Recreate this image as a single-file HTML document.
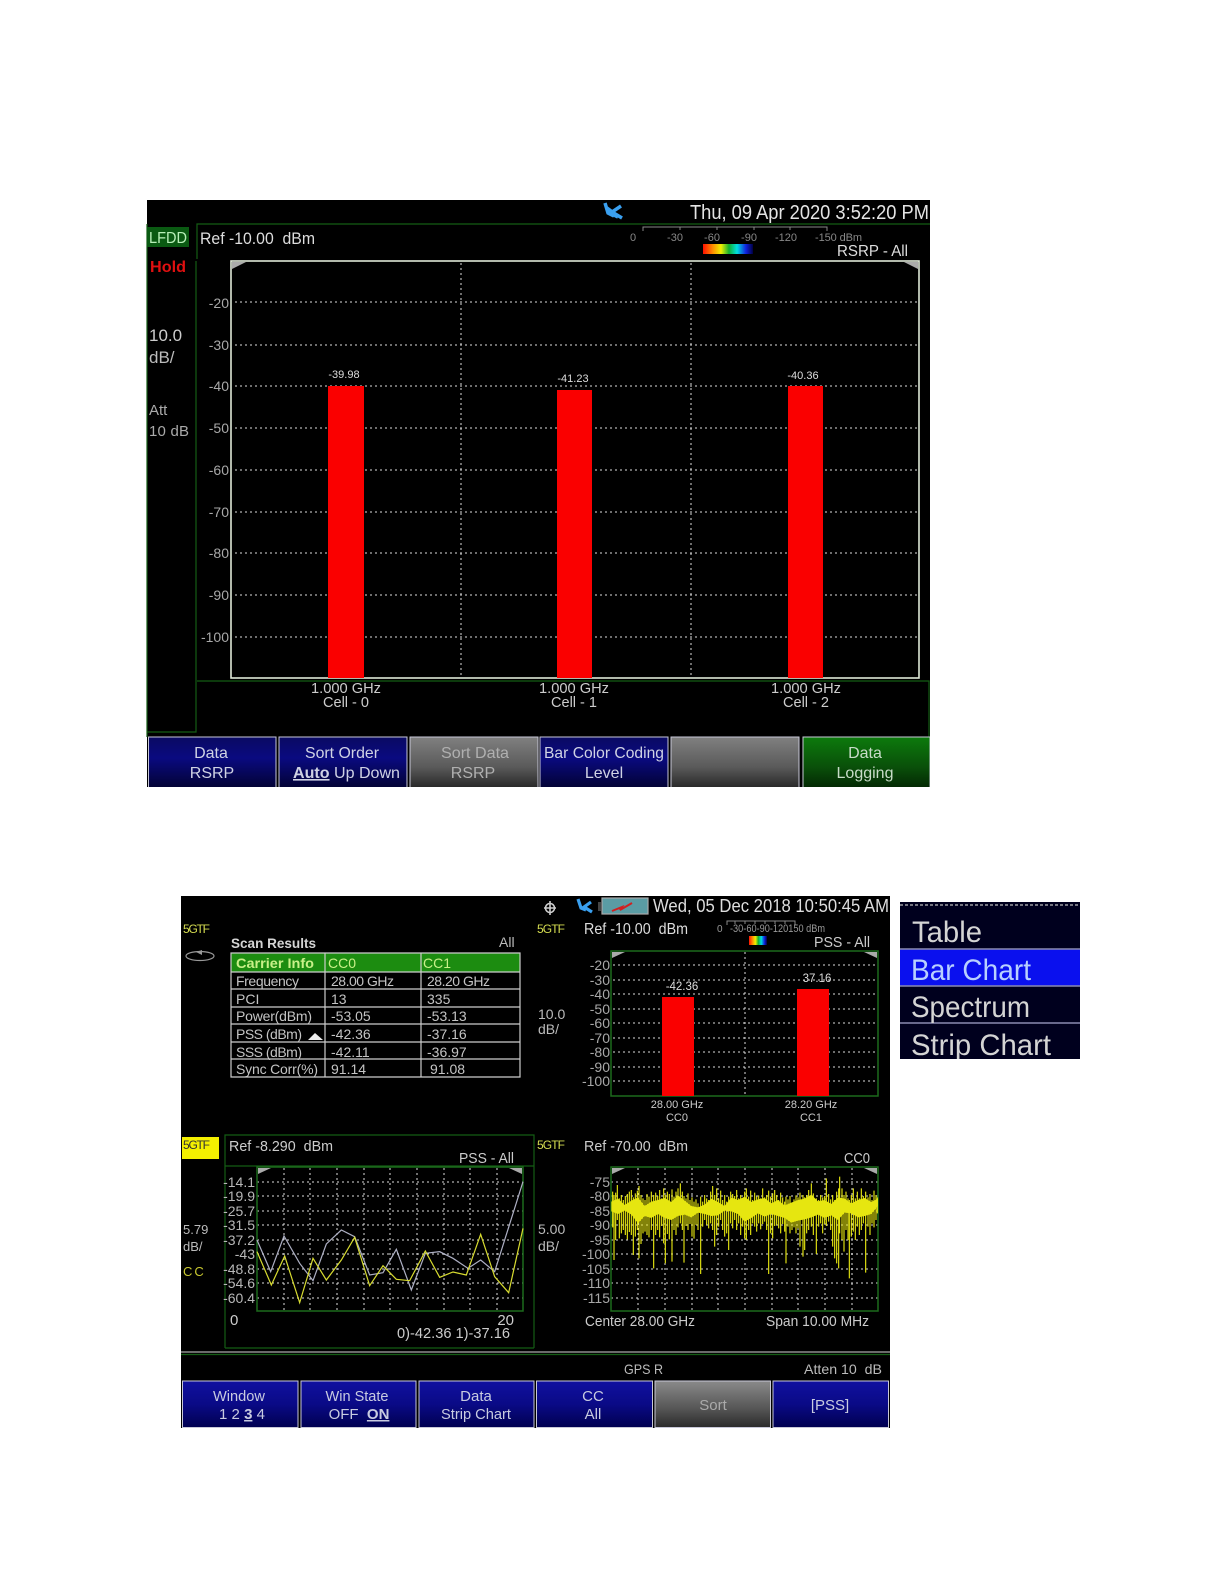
<!DOCTYPE html>
<html><head><meta charset="utf-8"><title>Spectrum analyzer screens</title>
<style>
html,body{margin:0;padding:0;background:#fff}
svg{display:block;filter:blur(.35px)}
text{font-family:"Liberation Sans",sans-serif;fill:#d8d8d8}
.g{stroke:#ddd;stroke-width:1;stroke-dasharray:2 3;fill:none}
.gb{stroke:#1c6a1c;fill:none;stroke-width:1.5}
.b{text-anchor:middle;font-size:16px;fill:#cfd2e4}
.s{text-anchor:middle;font-size:15px;fill:#c8cbe0}
.y1{text-anchor:end;font-size:14px;fill:#a8a8a8}
.y2{text-anchor:end;font-size:14px;fill:#b8b8b8}
.t{font-size:14px;fill:#c4c4c4}
.yl{font-size:12px;fill:#d4dc50}
.btn{stroke:#c8c8d8;stroke-width:1}
</style></head><body>
<svg width="1224" height="1584" viewBox="0 0 1224 1584" xmlns="http://www.w3.org/2000/svg">
<defs>
<linearGradient id="nv" x1="0" y1="0" x2="0" y2="1"><stop offset="0" stop-color="#0a0a62"/><stop offset=".35" stop-color="#0a0a80"/><stop offset="1" stop-color="#00001c"/></linearGradient>
<linearGradient id="nv2" x1="0" y1="0" x2="0" y2="1"><stop offset="0" stop-color="#1010a0"/><stop offset=".5" stop-color="#0a0a86"/><stop offset="1" stop-color="#000050"/></linearGradient>
<linearGradient id="gy" x1="0" y1="0" x2="0" y2="1"><stop offset="0" stop-color="#808080"/><stop offset=".5" stop-color="#5a5a5a"/><stop offset="1" stop-color="#111"/></linearGradient>
<linearGradient id="gy2" x1="0" y1="0" x2="0" y2="1"><stop offset="0" stop-color="#8a8a8a"/><stop offset=".6" stop-color="#555"/><stop offset="1" stop-color="#2a2a2a"/></linearGradient>
<linearGradient id="gn" x1="0" y1="0" x2="0" y2="1"><stop offset="0" stop-color="#0c7a0c"/><stop offset=".5" stop-color="#0a500a"/><stop offset="1" stop-color="#001500"/></linearGradient>
<linearGradient id="sp" x1="0" y1="0" x2="1" y2="0"><stop offset="0" stop-color="#ff1000"/><stop offset=".2" stop-color="#ff9000"/><stop offset=".36" stop-color="#f0f000"/><stop offset=".52" stop-color="#10b030"/><stop offset=".68" stop-color="#00e0e0"/><stop offset=".86" stop-color="#1020e0"/><stop offset="1" stop-color="#000040"/></linearGradient>
<clipPath id="pop"><rect x="900" y="902" width="180" height="157"/></clipPath>
<clipPath id="p1b"><rect x="147" y="700" width="783" height="87"/></clipPath>
</defs>

<!-- PANEL 1 -->
<rect x="147" y="200" width="783" height="587" fill="#000"/>
<path d="M605 203l3 10 6 3M621 206l-9 6 10 6M607 208l8 6M612 214l6 3" stroke="#3aa0f0" stroke-width="3.500" fill="none"/>
<text x="690" y="219" font-size="20" textLength="239" lengthAdjust="spacingAndGlyphs" style="fill:#e4e4e4">Thu, 09 Apr 2020 3:52:20 PM</text>
<path d="M197 259V224H930M196 261V732H147M197 681H929V737M147 224V737" stroke="#145c14" stroke-width="1.200" fill="none"/>
<rect x="147" y="227" width="42" height="20" fill="#0a5a12"/>
<text x="149" y="243" font-size="16" textLength="38" lengthAdjust="spacingAndGlyphs" style="fill:#b8f0b8">LFDD</text>
<text x="150" y="272" font-size="16" font-weight="bold" textLength="36" lengthAdjust="spacingAndGlyphs" style="fill:#e01010">Hold</text>
<text x="149" y="341" font-size="17" style="fill:#ccc">10.0</text>
<text x="149" y="363" font-size="17" style="fill:#bbb">dB/</text>
<text x="149" y="415" font-size="15" style="fill:#aaa">Att</text>
<text x="149" y="436" font-size="15" textLength="40" style="fill:#aaa">10 dB</text>
<text x="200" y="244" font-size="17" textLength="115" lengthAdjust="spacingAndGlyphs" style="fill:#ddd">Ref -10.00&#160;&#160;dBm</text>
<!-- scale -->
<path d="M643 231V227H827V231M680 227v3M717 227v3M754 227v3M790 227v3" stroke="#888" fill="none"/>
<text x="633" y="241" font-size="11" text-anchor="middle" style="fill:#888">0</text>
<text x="675" y="241" font-size="11" text-anchor="middle" style="fill:#888">-30</text>
<text x="712" y="241" font-size="11" text-anchor="middle" style="fill:#888">-60</text>
<text x="749" y="241" font-size="11" text-anchor="middle" style="fill:#888">-90</text>
<text x="786" y="241" font-size="11" text-anchor="middle" style="fill:#888">-120</text>
<text x="815" y="241" font-size="11" textLength="47" style="fill:#888">-150 dBm</text>
<rect x="703" y="244" width="50" height="10" fill="url(#sp)"/>
<text x="837" y="256" font-size="16" textLength="71" lengthAdjust="spacingAndGlyphs" style="fill:#ddd">RSRP - All</text>
<!-- plot 1 -->
<path class="g" d="M235 302H919M235 345H919M235 386H919M235 428H919M235 470H919M235 512H919M235 553H919M235 595H919M235 637H919M461 263V678M691 263V678"/>
<rect x="231" y="261" width="688" height="417" fill="none" stroke="#dfe8d8" stroke-width="1.600"/>
<path d="M232 262h14l-14 7zM918 262h-14l14 7z" fill="#aaa"/>
<text class="y1" x="229" y="308">-20</text><text class="y1" x="229" y="350">-30</text><text class="y1" x="229" y="391">-40</text><text class="y1" x="229" y="433">-50</text><text class="y1" x="229" y="475">-60</text><text class="y1" x="229" y="517">-70</text><text class="y1" x="229" y="558">-80</text><text class="y1" x="229" y="600">-90</text><text class="y1" x="229" y="642">-100</text>
<rect x="328" y="386" width="36" height="292" fill="#fa0000"/>
<rect x="557" y="390" width="35" height="288" fill="#fa0000"/>
<rect x="788" y="386" width="35" height="292" fill="#fa0000"/>
<g font-size="11" text-anchor="middle">
<text x="344" y="378" style="fill:#ddd">-39.98</text>
<text x="573" y="382" style="fill:#ddd">-41.23</text>
<text x="803" y="379" style="fill:#ddd">-40.36</text>
</g>
<g font-size="15" text-anchor="middle">
<text x="346" y="693" textLength="70" lengthAdjust="spacingAndGlyphs" style="fill:#ccc">1.000 GHz</text>
<text x="346" y="707" textLength="46" lengthAdjust="spacingAndGlyphs" style="fill:#ccc">Cell - 0</text>
<text x="574" y="693" textLength="70" lengthAdjust="spacingAndGlyphs" style="fill:#ccc">1.000 GHz</text>
<text x="574" y="707" textLength="46" lengthAdjust="spacingAndGlyphs" style="fill:#ccc">Cell - 1</text>
<text x="806" y="693" textLength="70" lengthAdjust="spacingAndGlyphs" style="fill:#ccc">1.000 GHz</text>
<text x="806" y="707" textLength="46" lengthAdjust="spacingAndGlyphs" style="fill:#ccc">Cell - 2</text>
</g>
<g clip-path="url(#p1b)">
<rect class="btn" x="148.500" y="737" width="127.500" height="60" fill="url(#nv)"/>
<rect class="btn" x="279" y="737" width="128" height="60" fill="url(#nv)"/>
<rect class="btn" x="410" y="737" width="128" height="60" fill="url(#gy)"/>
<rect class="btn" x="540" y="737" width="128" height="60" fill="url(#nv)"/>
<rect class="btn" x="671" y="737" width="128" height="60" fill="url(#gy)"/>
<rect class="btn" x="803" y="737" width="127" height="60" fill="url(#gn)"/>
</g>
<text class="b" x="211" y="758">Data</text><text class="b" x="212" y="778">RSRP</text>
<text class="b" x="342" y="758" textLength="74" lengthAdjust="spacingAndGlyphs">Sort Order</text>
<text x="293" y="778" font-size="16" textLength="107" lengthAdjust="spacingAndGlyphs" style="fill:#cfd2e4"><tspan font-weight="bold" text-decoration="underline">Auto</tspan> Up Down</text>
<text class="b" x="475" y="758" style="fill:#b0b0b0" textLength="68" lengthAdjust="spacingAndGlyphs">Sort Data</text><text class="b" x="473" y="778" style="fill:#b0b0b0">RSRP</text>
<text class="b" x="604" y="758" textLength="120" lengthAdjust="spacingAndGlyphs">Bar Color Coding</text><text class="b" x="604" y="778">Level</text>
<text class="b" x="865" y="758" style="fill:#c8dcc8">Data</text><text class="b" x="865" y="778" style="fill:#c8dcc8">Logging</text>

<!-- PANEL 2 -->
<rect x="181" y="896" width="709" height="532" fill="#000"/>
<g stroke="#ccc" stroke-width="1.600" fill="none"><circle cx="550" cy="908" r="4.500"/><path d="M544 908h12M550 901v14"/></g>
<path d="M578 899l3 9 5 2M591 902l-7 5 8 5M584 907l5 3" stroke="#3aa0f0" stroke-width="3.200" fill="none"/>
<rect x="598" y="902" width="3" height="9" fill="#444"/>
<rect x="602" y="898" width="46" height="16" fill="#5a9ca4" stroke="#aaa" stroke-width="1.200"/>
<path d="M612 911l10-4-2 3 12-7" stroke="#d02020" stroke-width="2" fill="none"/>
<text x="653" y="912" font-size="18" textLength="236" lengthAdjust="spacingAndGlyphs" style="fill:#ddd">Wed, 05 Dec 2018 10:50:45 AM</text>
<text class="yl" x="183" y="933" textLength="27">5GTF</text>
<text class="yl" x="537" y="933" textLength="28">5GTF</text>
<ellipse cx="200" cy="956" rx="14" ry="4.500" fill="none" stroke="#999" stroke-width="1.200"/><path d="M196 952l6-2v5z" fill="#999"/>
<text x="231" y="948" font-size="14" font-weight="bold" textLength="85" lengthAdjust="spacingAndGlyphs" style="fill:#d4d4d4">Scan Results</text>
<text x="499" y="947" font-size="14" style="fill:#bbb">All</text>
<!-- table -->
<rect x="231" y="953" width="289" height="19" fill="#1c8c10"/>
<path d="M231 953H520V1077H231ZM231 972H520M231 989H520M231 1007H520M231 1024H520M231 1042H520M231 1059H520M325 953V1077M421 953V1077" fill="none" stroke="#ccc" stroke-width="1.200"/>
<g font-size="14" font-weight="bold">
<text x="236" y="968" textLength="78" lengthAdjust="spacingAndGlyphs" style="fill:#c8f088">Carrier Info</text>
<text x="328" y="968" style="fill:#c8f088;font-weight:normal">CC0</text>
<text x="423" y="968" style="fill:#c8f088;font-weight:normal">CC1</text>
</g>
<text class="t" x="236" y="986" textLength="63">Frequency</text><text class="t" x="331" y="986" textLength="63">28.00 GHz</text><text class="t" x="427" y="986" textLength="63">28.20 GHz</text>
<text class="t" x="236" y="1004">PCI</text><text class="t" x="331" y="1004">13</text><text class="t" x="427" y="1004">335</text>
<text class="t" x="236" y="1021" textLength="76">Power(dBm)</text><text class="t" x="331" y="1021">-53.05</text><text class="t" x="427" y="1021">-53.13</text>
<text class="t" x="236" y="1039" textLength="66">PSS (dBm)</text><text class="t" x="331" y="1039">-42.36</text><text class="t" x="427" y="1039">-37.16</text>
<path d="M308 1040l7-7 8 7z" fill="#eee"/>
<text class="t" x="236" y="1057" textLength="66">SSS (dBm)</text><text class="t" x="331" y="1057">-42.11</text><text class="t" x="427" y="1057">-36.97</text>
<text class="t" x="236" y="1074" textLength="82">Sync Corr(%)</text><text class="t" x="331" y="1074">91.14</text><text class="t" x="430" y="1074">91.08</text>

<!-- top right -->
<text x="584" y="934" font-size="16" textLength="104" lengthAdjust="spacingAndGlyphs" style="fill:#ddd">Ref -10.00&#160;&#160;dBm</text>
<text x="717" y="932" font-size="10" style="fill:#999">0</text>
<path d="M727 925V921H795V925M735 921v3M745 921v3M755 921v3M765 921v3M775 921v3M785 921v3" stroke="#888" fill="none"/>
<text x="730" y="932" font-size="11" textLength="95" lengthAdjust="spacingAndGlyphs" style="fill:#999">-30-60-90-120150 dBm</text>
<rect x="749" y="936" width="18" height="9" fill="url(#sp)"/>
<text x="814" y="947" font-size="15" textLength="56" lengthAdjust="spacingAndGlyphs" style="fill:#ccc">PSS - All</text>
<path class="g" d="M613 965H878M613 980H878M613 994H878M613 1009H878M613 1023H878M613 1038H878M613 1052H878M613 1067H878M613 1081H878M745 952V1096"/>
<rect class="gb" x="611" y="951" width="267" height="145"/>
<path d="M612 952h13l-13 6zM877 952h-13l13 6z" fill="#aaa"/>
<text class="y1" x="610" y="970">-20</text><text class="y1" x="610" y="985">-30</text><text class="y1" x="610" y="999">-40</text><text class="y1" x="610" y="1014">-50</text><text class="y1" x="610" y="1028">-60</text><text class="y1" x="610" y="1043">-70</text><text class="y1" x="610" y="1057">-80</text><text class="y1" x="610" y="1072">-90</text><text class="y1" x="610" y="1086">-100</text>
<rect x="662" y="997" width="32" height="99" fill="#fa0000"/>
<rect x="797" y="989" width="32" height="107" fill="#fa0000"/>
<text x="682" y="990" font-size="11.500" text-anchor="middle" style="fill:#ddd">-42.36</text>
<text x="817" y="982" font-size="11.500" text-anchor="middle" style="fill:#ddd">37.16</text>
<g font-size="11" text-anchor="middle">
<text x="677" y="1108" style="fill:#ccc">28.00 GHz</text><text x="677" y="1121" style="fill:#ccc">CC0</text>
<text x="811" y="1108" style="fill:#ccc">28.20 GHz</text><text x="811" y="1121" style="fill:#ccc">CC1</text>
</g>
<text x="538" y="1019" font-size="14" style="fill:#bbb">10.0</text><text x="538" y="1034" font-size="14" style="fill:#bbb">dB/</text>

<!-- bottom left -->
<rect x="182" y="1137" width="37" height="22" fill="#f4f000"/>
<text x="183" y="1149" font-size="12" textLength="27" style="fill:#333">5GTF</text>
<path d="M225 1348V1135H534V1166M225 1166H534M225 1348H534M534 1135V1348" stroke="#145c14" stroke-width="1.200" fill="none"/>
<text x="229" y="1151" font-size="15" textLength="104" lengthAdjust="spacingAndGlyphs" style="fill:#ccc">Ref -8.290&#160;&#160;dBm</text>
<text x="459" y="1163" font-size="15" textLength="55" lengthAdjust="spacingAndGlyphs" style="fill:#ccc">PSS - All</text>
<path class="g" d="M257 1182H523M257 1196H523M257 1211H523M257 1225H523M257 1240H523M257 1254H523M257 1269H523M257 1283H523M257 1298H523M284 1168V1311M310 1168V1311M337 1168V1311M364 1168V1311M390 1168V1311M417 1168V1311M444 1168V1311M470 1168V1311M497 1168V1311"/>
<rect class="gb" x="257" y="1167" width="266" height="144"/>
<path d="M258 1168h13l-13 6zM522 1168h-13l13 6z" fill="#aaa"/>
<text class="y2" x="255" y="1187">-14.1</text><text class="y2" x="255" y="1201">-19.9</text><text class="y2" x="255" y="1216">-25.7</text><text class="y2" x="255" y="1230">-31.5</text><text class="y2" x="255" y="1245">-37.2</text><text class="y2" x="255" y="1259">-43</text><text class="y2" x="255" y="1274">-48.8</text><text class="y2" x="255" y="1288">-54.6</text><text class="y2" x="255" y="1303">-60.4</text>
<g transform="translate(178,1120) scale(.33333)" fill="none" stroke-width="3.600">
<polyline stroke="#aeb0c4" points="237,360 278,455 318,348 365,430 405,482 445,372 490,330 530,350 575,465 615,458 655,388 700,510 742,400 785,395 825,415 870,445 908,420 950,455 1035,185"/>
<polyline stroke="#d8dc30" points="237,395 280,495 320,408 365,548 405,415 445,480 490,420 530,352 575,497 615,437 655,478 695,482 742,393 785,472 825,456 865,465 908,343 950,470 992,518 1035,325"/>
</g>
<text x="183" y="1234" font-size="13" style="fill:#bbb">5.79</text><text x="183" y="1251" font-size="13" style="fill:#bbb">dB/</text>
<text x="183" y="1276" font-size="13" letter-spacing="2" style="fill:#c8c830">CC</text>
<text x="230" y="1325" font-size="15" style="fill:#ccc">0</text>
<text x="514" y="1325" font-size="15" text-anchor="end" style="fill:#ccc">20</text>
<text x="397" y="1338" font-size="15" textLength="113" lengthAdjust="spacingAndGlyphs" style="fill:#ccc">0)-42.36 1)-37.16</text>

<!-- bottom right -->
<text class="yl" x="537" y="1149" textLength="28">5GTF</text>
<text x="584" y="1151" font-size="15" textLength="104" lengthAdjust="spacingAndGlyphs" style="fill:#ccc">Ref -70.00&#160;&#160;dBm</text>
<text x="844" y="1163" font-size="15" textLength="26" lengthAdjust="spacingAndGlyphs" style="fill:#ccc">CC0</text>
<path class="g" d="M611 1182H878M611 1196H878M611 1211H878M611 1225H878M611 1240H878M611 1254H878M611 1269H878M611 1283H878M611 1298H878M638 1168V1311M665 1168V1311M692 1168V1311M718 1168V1311M745 1168V1311M772 1168V1311M798 1168V1311M825 1168V1311M852 1168V1311"/>
<rect class="gb" x="611" y="1167" width="267" height="144"/>
<path d="M612 1168h13l-13 6zM877 1168h-13l13 6z" fill="#aaa"/>
<text class="y1" x="610" y="1187">-75</text><text class="y1" x="610" y="1201">-80</text><text class="y1" x="610" y="1216">-85</text><text class="y1" x="610" y="1230">-90</text><text class="y1" x="610" y="1245">-95</text><text class="y1" x="610" y="1259">-100</text><text class="y1" x="610" y="1274">-105</text><text class="y1" x="610" y="1288">-110</text><text class="y1" x="610" y="1303">-115</text>
<g transform="translate(528,1120) scale(.33333)">
<path fill="#e6e610" d="M250 245L270 236 290 255 310 242 330 232 350 258 370 245 390 240 410 234 430 246 450 226 470 242 490 258 510 262 530 254 550 236 570 246 590 258 610 232 630 240 650 230 670 246 690 238 710 234 730 250 750 240 770 256 790 248 810 240 830 236 850 224 870 244 890 240 910 252 930 232 950 236 970 250 990 240 1010 234 1030 246 1050 236L1050 258 1030 282 1010 288 990 292 970 280 950 278 930 300 910 286 890 294 870 284 850 292 830 298 810 302 790 308 770 294 750 288 730 282 710 290 690 280 670 294 650 305 630 282 610 274 590 272 570 286 550 288 530 282 510 278 490 292 470 284 450 288 430 300 410 294 390 282 370 294 350 288 330 310 310 284 290 272 270 282 250 274Z"/>
<path fill="none" stroke="#e6e610" stroke-width="3.400" d="M254 215V322M258 225V420M263 218V360M268 195V300M274 235V355M280 225V340M286 240V330M292 228V345M298 222V358M304 215V336M310 210V345M316 232V405M322 220V350M328 212V330M333 198V415M339 225V372M345 235V340M351 240V335M357 222V345M363 230V352M370 215V330M377 225V445M383 218V345M389 228V330M395 210V352M401 235V318M407 205V370M412 225V430M418 215V342M424 222V358M432 208V425M438 230V330M444 215V345M450 205V322M457 190V310M463 215V330M468 228V428M474 235V318M480 220V330M486 240V312M492 232V350M498 245V356M504 238V315M510 250V330M518 230V462M524 245V320M530 225V300M536 235V315M542 240V325M548 215V310M554 198V330M560 225V380M566 205V345M572 235V320M578 212V300M584 240V330M590 225V350M596 245V340M602 230V390M608 215V310M614 222V325M620 228V300M626 210V330M632 235V310M638 225V345M644 240V320M650 215V355M655 205V360M662 230V330M668 212V345M674 240V310M680 218V320M686 230V335M692 226V310M698 235V328M704 205V312M710 232V305M716 225V330M722 212V462M728 230V340M734 220V355M740 210V318M746 225V315M752 240V325M758 218V340M764 232V312M770 245V335M774 230V430M780 238V320M786 228V340M792 250V330M798 238V322M804 226V340M810 232V325M816 218V380M825 225V410M830 232V390M836 225V340M842 210V330M850 190V320M856 220V345M865 235V402M872 240V320M878 225V310M884 232V340M890 228V312M895 175V318M902 222V305M908 238V330M914 225V380M920 240V415M926 215V430M932 205V445M935 170V340M942 205V360M948 225V395M954 215V330M960 235V360M964 240V475M970 225V350M976 205V335M982 235V360M988 215V320M994 235V345M1000 205V330M1006 228V310M1013 215V458M1020 232V320M1026 222V345M1032 240V310M1038 212V322M1044 225V300M1048 232V280"/>
</g>
<text x="538" y="1234" font-size="14" style="fill:#bbb">5.00</text><text x="538" y="1251" font-size="14" style="fill:#bbb">dB/</text>
<text x="585" y="1326" font-size="15" textLength="110" lengthAdjust="spacingAndGlyphs" style="fill:#ccc">Center 28.00 GHz</text>
<text x="766" y="1326" font-size="15" textLength="103" lengthAdjust="spacingAndGlyphs" style="fill:#ccc">Span 10.00 MHz</text>

<!-- footer -->
<path d="M181 1352H890" stroke="#aaa" stroke-width="1.200"/>
<path d="M181 1354.500H890" stroke="#145c14" stroke-width="1.200"/>
<text x="624" y="1374" font-size="14" textLength="39" lengthAdjust="spacingAndGlyphs" style="fill:#bbb">GPS R</text>
<text x="804" y="1374" font-size="14" textLength="78" lengthAdjust="spacingAndGlyphs" style="fill:#bbb">Atten 10&#160;&#160;dB</text>
<rect class="btn" x="182.500" y="1381" width="115.500" height="46.500" fill="url(#nv2)"/>
<rect class="btn" x="301" y="1381" width="115" height="46.500" fill="url(#nv2)"/>
<rect class="btn" x="419" y="1381" width="115" height="46.500" fill="url(#nv2)"/>
<rect class="btn" x="536.500" y="1381" width="116" height="46.500" fill="url(#nv2)"/>
<rect class="btn" x="655" y="1381" width="115.500" height="46.500" fill="url(#gy2)"/>
<rect class="btn" x="773" y="1381" width="115.500" height="46.500" fill="url(#nv2)"/>
<text class="s" x="239" y="1401" textLength="52" lengthAdjust="spacingAndGlyphs">Window</text><text class="s" x="242" y="1419">1 2 <tspan font-weight="bold" text-decoration="underline">3</tspan> 4</text>
<text class="s" x="357" y="1401" textLength="63" lengthAdjust="spacingAndGlyphs">Win State</text><text class="s" x="359" y="1419">OFF&#160;&#160;<tspan font-weight="bold" text-decoration="underline">ON</tspan></text>
<text class="s" x="476" y="1401">Data</text><text class="s" x="476" y="1419" textLength="70" lengthAdjust="spacingAndGlyphs">Strip Chart</text>
<text class="s" x="593" y="1401">CC</text><text class="s" x="593" y="1419">All</text>
<text class="s" x="713" y="1410" style="fill:#aaa">Sort</text>
<text class="s" x="830" y="1410">[PSS]</text>

<!-- POPUP -->
<rect x="900" y="902" width="180" height="157" fill="#00001e"/>
<rect x="900" y="949" width="180" height="37" fill="#0a10ee"/>
<path d="M900 905H1080" stroke="#bbb" stroke-dasharray="3 2" stroke-width="1.200"/>
<path d="M900 949H1080M900 986H1080M900 1023H1080" stroke="#8a8ab0" stroke-width="1.600"/>
<g clip-path="url(#pop)" font-size="30">
<text x="912" y="942" textLength="70" lengthAdjust="spacingAndGlyphs" style="fill:#d4d4d4">Table</text>
<text x="911" y="980" textLength="120" lengthAdjust="spacingAndGlyphs" style="fill:#b8d0ff">Bar Chart</text>
<text x="911" y="1017" textLength="119" lengthAdjust="spacingAndGlyphs" style="fill:#d4d4d4">Spectrum</text>
<text x="911" y="1055" textLength="140" lengthAdjust="spacingAndGlyphs" style="fill:#d4d4d4">Strip Chart</text>
</g>
</svg>
</body></html>
